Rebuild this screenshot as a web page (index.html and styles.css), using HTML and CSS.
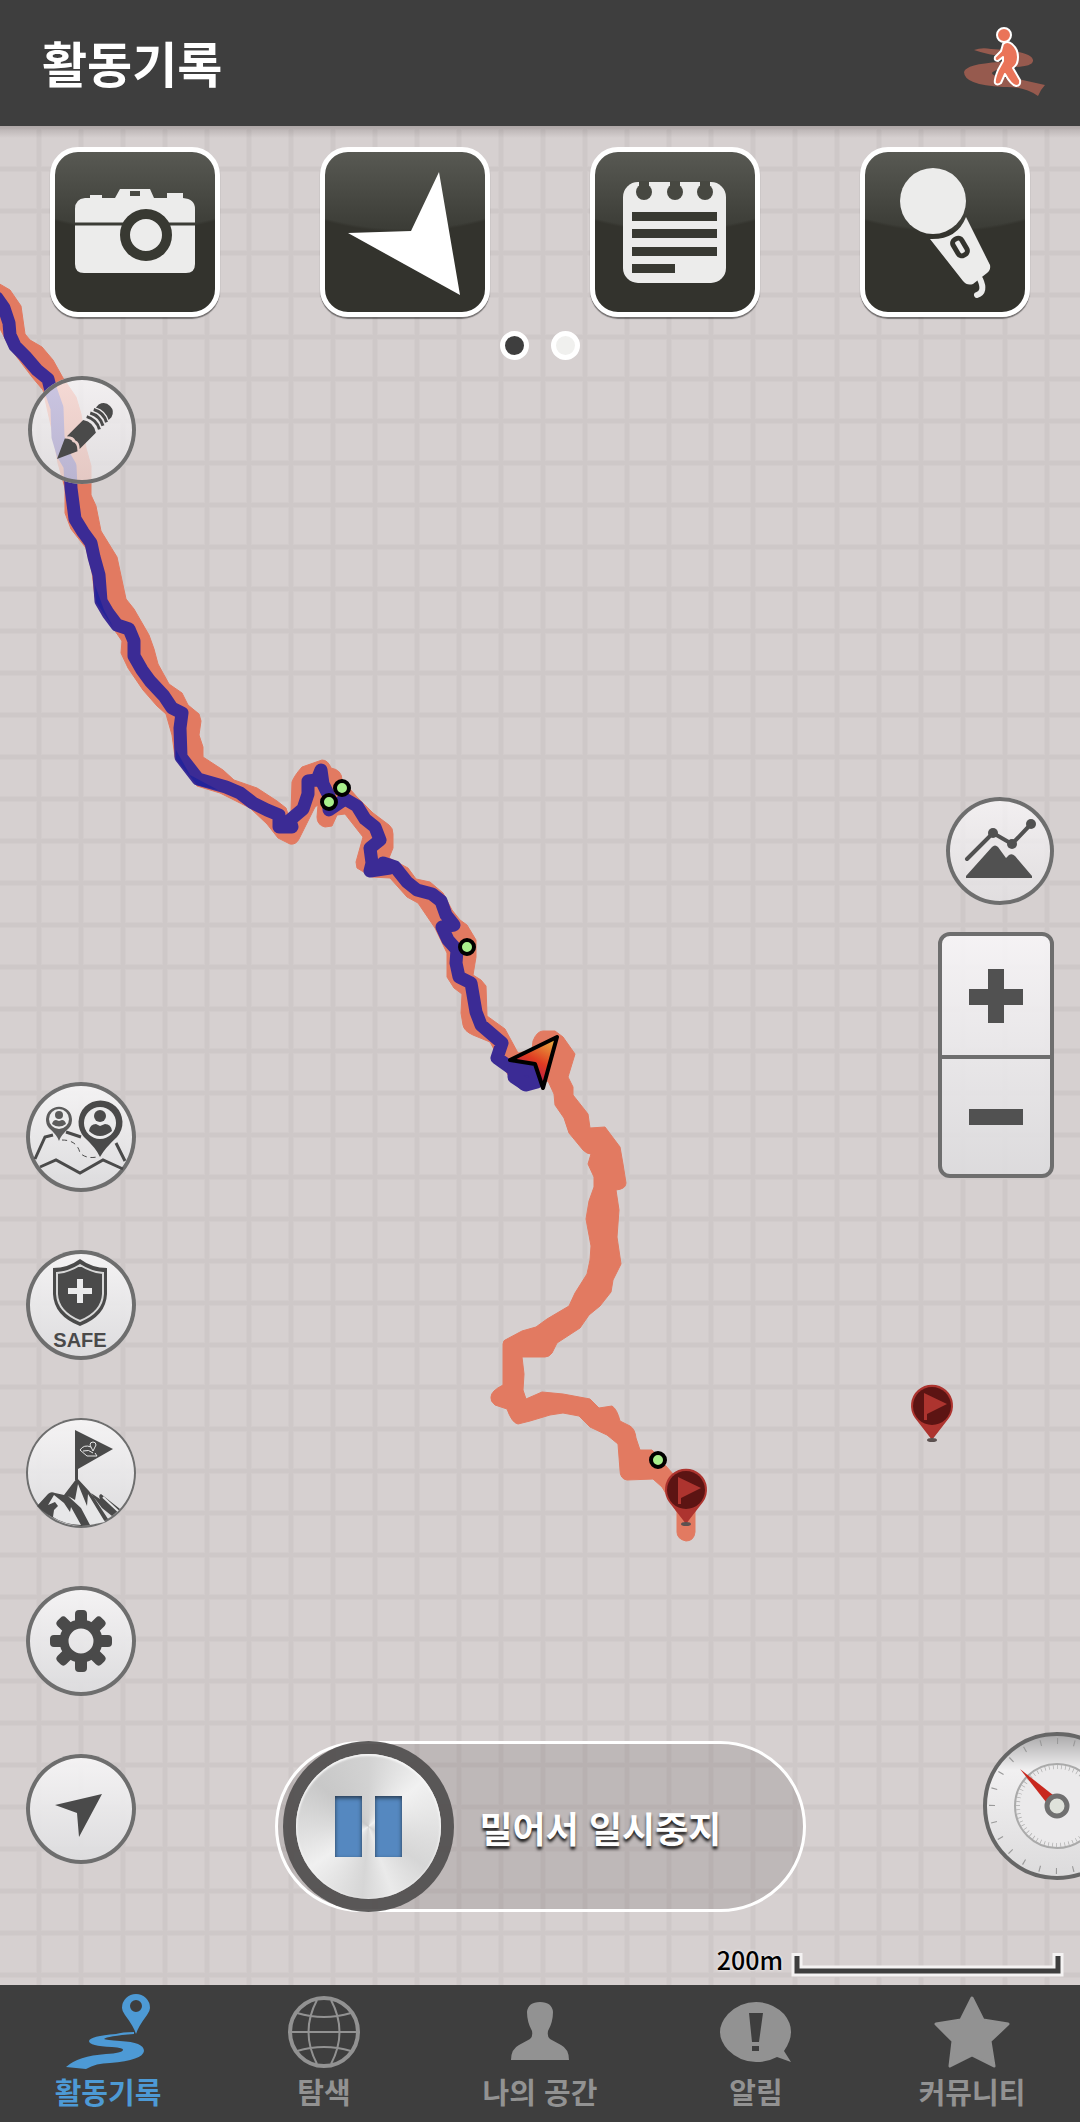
FILE: index.html
```html
<!DOCTYPE html>
<html lang="ko">
<head>
<meta charset="utf-8">
<meta name="viewport" content="width=device-width, initial-scale=1">
<title>활동기록</title>
<link rel="stylesheet" href="styles.css">
</head>
<body>
<header class="app-bar">
  <h1 class="app-title">활동기록</h1>
  <button class="activity-button" type="button" aria-label="걷기">
    <svg width="82" height="71" viewBox="0 0 82 71">
      <path fill="#965a4e" d="M10 23 Q18 20 27 22 Q70 24 69 34 Q68 40 48 40 Q30 42 28 46 Q28 50 54 52 L81 58 Q77 62 74 69 Q60 59 39 60 Q0 58 0 45 Q2 37 36 35 Q52 33 43 30 Q24 28 10 23Z"/>
      <g fill="#ea7459" stroke="#fff" stroke-width="2" stroke-linejoin="round">
        <path d="M39 17 Q43 13 48 17 Q54 22 54 30 Q54 38 49 41 L56 53 Q57 59 52 59 Q47 58 41 47 L37 56 Q33 59 31 56 Q30 53 34 43 L39 34 L39 30 L34 34 Q30 34 31 30 L37 24Z"/>
        <circle cx="40" cy="8" r="7"/>
      </g>
    </svg>
  </button>
</header>

<main class="map">
  <svg class="map-canvas" width="100%" height="100%" aria-hidden="true">
    <defs>
      <pattern id="cell" width="42" height="42" x="36" y="40" patternUnits="userSpaceOnUse">
        <path fill="#d2cccc" d="M0 0H6V42H0ZM0 0H42V6H0Z"/>
        <path fill="#cec8c8" d="M1 1H5V42H1ZM1 1H42V5H1ZM1 0H5V1H1ZM0 1H1V5H0Z"/>
      </pattern>
      <linearGradient id="heading" x1="1" y1="0" x2="0.5" y2="1">
        <stop offset="0" stop-color="#eac044"/>
        <stop offset="0.55" stop-color="#e03a22"/>
        <stop offset="1" stop-color="#a8105c"/>
      </linearGradient>
      <g id="waypoint">
        <circle r="7" fill="#a9ef8c" stroke="#000" stroke-width="4"/>
      </g>
      <g id="flag-pin">
        <path fill="#ad342f" d="M0 34 Q-3 30 -17 12 A21 21 0 1 1 17 12 Q3 30 0 34Z"/>
        <ellipse cy="34" rx="5" ry="2" fill="#5c5150"/>
        <circle r="19" fill="#5c1413"/>
        <path fill="#ad342f" d="M-8 -13 L15 -2 L-5 8 V14 H-8Z"/>
      </g>
    </defs>
    <rect width="100%" height="100%" fill="url(#cell)"/>
    <g transform="translate(0 -126)">
      <path fill="#e27a61" stroke="#e27a61" stroke-width="1" stroke-linejoin="round" d="M-2 283 L10 290 L21 306 L25 334 L30 340 L42 347 L53 360 L63 378 L76 397 L81 414 L86 448 L91 466 L91 495 L96 506 L101 531 L117 557 L126 599 L134 609 L149 635 L154 649 L158 664 L169 684 L182 693 L188 705 L199 714 L201 721 L199 735 L203 747 L203 757 L223 770 L234 780 L257 788 L277 801 L286 808 L288 814 L291 812 L292 782 Q294 776 302 767 L322 760 Q328 760 331 768 Q342 770 342 780 L357 797 L373 813 L389 825 Q393 828 393 834 L393 848 L389 858 L408 868 L416 879 L430 882 L443 893 L452 910 L460 920 L467 925 L476 940 L476 957 L473 975 L481 980 L486 986 L487 1016 L505 1029 L518 1053 L532 1050 L533 1041 Q537 1031 543 1031 L555 1031 L563 1037 L575 1054 L568 1077 L573 1087 L573 1095 L588 1114 L590 1128 L605 1127 L611 1135 L620 1147 L623 1164 L626 1183 Q626 1189 616 1190 L619 1210 L617 1237 L621 1264 L613 1280 L611 1292 L600 1306 L589 1315 L580 1328 L557 1343 L552 1353 Q549 1357 545 1357 L522 1357 L524 1374 L523 1390 L526 1399 L542 1392 L563 1394 L590 1399 L599 1408 L612 1406 Q617 1409 620 1421 L630 1426 Q635 1429 636 1438 L640 1450 L652 1450 L673 1474 L695 1510 L695 1532 Q694 1541 686 1541 Q677 1539 677 1532 L677 1512 L662 1487 L653 1479 L627 1480 Q620 1479 620 1470 L618 1444 L607 1435 L590 1427 L579 1416 L563 1413 L550 1415 L530 1421 L518 1424 Q512 1423 507 1409 L495 1405 Q490 1401 491 1397 Q491 1391 503 1385 L503 1344 Q503 1340 507 1339 L522 1331 L536 1327 L547 1319 L569 1306 L575 1293 L587 1274 L590 1260 L591 1246 L586 1219 L589 1201 L594 1187 L594 1177 L588 1164 L591 1154 Q587 1154 583 1150 L569 1133 L564 1118 L555 1105 L554 1094 L548 1081 L526 1090 L508 1075 L490 1042 L473 1035 Q464 1031 463 1025 L461 1013 L462 994 L454 988 L447 977 L447 953 L435 928 L418 903 L407 897 L390 878 L372 877 L357 868 L356 862 L363 837 L345 814 L337 815 L332 826 L325 827 Q317 825 317 817 L318 805 L315 807 L299 839 Q296 845 290 844 L278 838 L267 824 L250 808 L220 793 L197 786 L175 757 L172 735 L166 714 L157 706 L143 690 L128 668 L121 653 L122 641 L113 628 L95 597 L92 572 L86 548 L71 529 L65 513 L65 488 L58 463 L52 430 L43 390 L32 377 L10 348 L-2 325Z"/>
      <g fill="none" stroke="#3b2b95" stroke-width="13" stroke-linejoin="round" stroke-linecap="round">
        <path d="M-3 298 L4 308 L9 323 L10 335 L15 346 L25 356 L37 370 L48 379 L51 391 L57 408 L58 437 L63 454 L70 466 L71 488 L75 519 L83 532 L91 543 L94 557 L99 575 L101 601 L108 613 L117 625 L129 629 L134 641 L134 656 L142 670 L150 681 L164 696 L172 708 L182 713 L180 728 L181 757 L198 779 L226 787 L240 793 L253 803 L267 810 L279 815 L279 827 L292 827 L290 820 L303 809 L308 794 L308 781 L317 780 L321 770 L323 784 L329 796 L329 810 L345 799 L357 806 L365 819 L375 827 L380 840 L370 848 L372 863 L370 871 L390 868 L383 863 L395 867 L407 882 L417 890 L432 894 L441 901 L446 915 L454 925 L442 927 L448 940 L457 950 L456 963 L459 977 L471 983 L476 1012 L481 1025 L502 1043 L497 1058 L514 1070 L524 1084 L538 1081 L532 1067 L516 1069"/>
        <path fill="#3b2b95" d="M514 1069 L534 1069 L537 1082 L526 1085 L514 1077Z"/>
      </g>
      <path fill="#23239a" d="M95 585 L96 602 L113 627 L104 610ZM176 750 L176 759 L197 785 L218 790 L190 775Z"/>
      <path fill="url(#heading)" stroke="#000" stroke-width="4" stroke-linejoin="round" d="M557 1037 L510 1060 L535 1064 L543 1088Z"/>
      <use href="#waypoint" x="342" y="788"/>
      <use href="#waypoint" x="329" y="802"/>
      <use href="#waypoint" x="467" y="947"/>
      <use href="#waypoint" x="658" y="1460"/>
      <use href="#flag-pin" x="686" y="1490"/>
      <use href="#flag-pin" x="932" y="1406"/>
    </g>
  </svg>

  <div class="toolbar">
    <button class="tile" type="button" aria-label="사진">
      <svg width="160" height="160" viewBox="0 0 160 160">
        <path fill="#ececeb" fill-rule="evenodd" d="M30 46 H35 V43 H47 V46 H60 L65 37 H95 L99 46 H112 V41 H128 V46 Q140 47 140 57 V112 Q140 121 131 121 H29 Q20 121 20 112 V57 Q20 47 30 46ZM75 39V44H85V39Z"/>
        <path stroke="#3b3c36" stroke-width="3" d="M20 72H140"/>
        <circle cx="91" cy="83" r="21" fill="#ececeb" stroke="#383932" stroke-width="10"/>
      </svg>
    </button>
    <button class="tile" type="button" aria-label="현재 위치">
      <svg width="160" height="160" viewBox="0 0 160 160">
        <path fill="#fff" d="M114 20 L135 143 L23 81 L86 79Z"/>
      </svg>
    </button>
    <button class="tile" type="button" aria-label="메모">
      <svg width="160" height="160" viewBox="0 0 160 160">
        <rect x="28" y="30" width="103" height="101" rx="15" fill="#ececeb"/>
        <g fill="#474841">
          <circle cx="49" cy="40" r="8"/><circle cx="80" cy="40" r="8"/><circle cx="110" cy="40" r="8"/>
          <path d="M44 29H54V36H44ZM75 29H85V36H75ZM105 29H115V36H105Z"/>
        </g>
        <path fill="#383932" d="M37 60H122V69H37ZM37 77H122V86H37ZM37 95H122V104H37ZM37 112H80V121H37Z"/>
      </svg>
    </button>
    <button class="tile" type="button" aria-label="음성 녹음">
      <svg width="160" height="160" viewBox="0 0 160 160">
        <g fill="#ececeb">
          <circle cx="68" cy="49" r="33"/>
          <path d="M65 87 Q92 88 101 65 L125 113 Q126 118 122 121 L108 132 Q102 134 98 129Z"/>
        </g>
        <path fill="none" stroke="#ececeb" stroke-width="6" stroke-linecap="round" d="M115 127 Q121 140 112 143"/>
        <rect x="90" y="86" width="10" height="18" rx="4" fill="none" stroke="#33332d" stroke-width="5" transform="rotate(-30 95 95)"/>
      </svg>
    </button>
  </div>

  <div class="pager">
    <button class="dot dot-current" type="button" aria-label="1"></button>
    <button class="dot" type="button" aria-label="2"></button>
  </div>

  <div class="controls">
    <div class="rail rail-left">
      <button class="round round-small" type="button" aria-label="편집">
        <svg width="108" height="108" viewBox="0 0 108 108">
          <g transform="translate(29 83) rotate(-45)" fill="#4a4a4a">
            <path d="M0 0 L20 -9 Q25 -4 23 -1 Q26 3 20 9Z"/>
            <path d="M23 -9 H46 Q52 0 46 9 H23 Q28 4 26 0 Q28 -4 23 -9ZM64 -9 H68 Q75 -7 75 0 Q75 7 68 9 H64 Q69 0 64 -9Z"/>
            <path fill="none" stroke="#4a4a4a" stroke-width="3" d="M51 -9Q56 0 51 9M56 -9Q61 0 56 9M61 -9Q66 0 61 9"/>
          </g>
        </svg>
      </button>
      <div class="rail-group">
        <button class="round" type="button" aria-label="친구 위치">
          <svg width="110" height="110" viewBox="0 0 110 110">
            <g fill="none" stroke="#4a4a4a" stroke-width="3">
              <path d="M9 77 L19 55 L27 53M40 50 L55 55M90 61 L99 79M14 85 L30 78 L54 91 L77 78 L97 87"/>
              <path stroke-width="1" stroke-dasharray="5 4" d="M36 58 Q51 58 54 71 Q60 77 71 75"/>
            </g>
            <path fill="#4a4a4a" d="M74 75 Q70 66 58 55 A22 22 0 1 1 91 55 Q79 66 74 75Z"/>
            <circle cx="74" cy="41" r="16" fill="#ebebec"/>
            <circle cx="74" cy="34" r="6" fill="#4a4a4a"/>
            <path fill="#4a4a4a" d="M63 49 Q64 42 70 42 L74 44 L79 42 Q85 42 86 49 Q80 54 74 54 Q68 54 63 49Z"/>
            <path fill="#5c5c5c" d="M33 59 Q31 53 23 46 A13 13 0 1 1 43 46 Q35 53 33 59Z"/>
            <circle cx="33" cy="37" r="10" fill="#ededee"/>
            <circle cx="33" cy="33" r="4" fill="#5c5c5c"/>
            <path fill="#5c5c5c" d="M26 42 Q27 38 30 38 L33 39 L36 38 Q39 38 40 42 Q33 47 26 42Z"/>
          </svg>
        </button>
        <button class="round" type="button" aria-label="안전">
          <svg width="110" height="110" viewBox="0 0 110 110">
            <path fill="#4a4a4a" d="M54 9 Q66 18 81 18 V44 Q80 66 54 76 Q28 66 27 44 V18 Q42 18 54 9Z"/>
            <path fill="none" stroke="#d8d8d8" stroke-width="2" d="M54 15 Q65 22 77 23 V44 Q76 62 54 71 Q32 62 31 44 V23 Q43 22 54 15Z"/>
            <path fill="#ebebec" d="M51 29H57V38H66V44H57V53H51V44H42V38H51Z"/>
            <text class="safe-text" x="54" y="97" text-anchor="middle">SAFE</text>
          </svg>
        </button>
        <button class="round round-thin" type="button" aria-label="정상 정복">
          <svg width="110" height="110" viewBox="0 0 110 110">
            <path fill="#4a4a4a" d="M49 12 L87 31 L52 51 V62 H49Z"/>
            <path fill="none" stroke="#e8e8e8" stroke-width="1" d="M54 32 Q58 26 65 29 M54 32 L61 38 H71 L69 35 M57 33 Q63 31 67 35 M67 33 L64 27 A3 3 0 1 1 70 27Z"/>
            <path fill="#4a4a4a" d="M51 60 L63 73 L76 90 L86 98 L94 91 L75 76 Q72 77 74 81 L65 75 L82 101 Q70 108 55 108 Q30 106 11 88 L22 76 Q25 73 29 75 L38 77Z"/>
            <path fill="#e7e7e8" d="M52 66 L61 88 L62 76 L79 104 L64 107 L55 90 L42 78 L49 82Z"/>
            <path fill="#e7e7e8" d="M22 87 L28 77 L38 85 L44 94 L45 89 L55 107 Q37 106 27 99 L28 92 L32 88 L29 84Z"/>
            <path fill="none" stroke="#e7e7e8" stroke-width="2" d="M77 79 L92 93"/>
          </svg>
        </button>
        <button class="round" type="button" aria-label="설정">
          <svg width="110" height="110" viewBox="0 0 110 110">
            <circle cx="55" cy="55" r="17" fill="none" stroke="#4a4a4a" stroke-width="9"/>
            <g fill="#4a4a4a">
              <path id="teeth" d="M49 37V28Q49 24 53 24H57Q61 24 61 28V37ZM49 73V82Q49 86 53 86H57Q61 86 61 82V73Z"/>
              <use href="#teeth" transform="rotate(45 55 55)"/>
              <use href="#teeth" transform="rotate(90 55 55)"/>
              <use href="#teeth" transform="rotate(135 55 55)"/>
            </g>
          </svg>
        </button>
        <button class="round" type="button" aria-label="내 위치로 이동">
          <svg width="110" height="110" viewBox="0 0 110 110">
            <path fill="#4a4a4a" d="M76 40 L53 83 L51 59 L29 51Z"/>
          </svg>
        </button>
      </div>
    </div>

    <button class="slider" type="button">
      <span class="knob"><span class="knob-face"><span class="bar"></span><span class="bar"></span></span></span>
      <span class="slider-label">밀어서 일시중지</span>
    </button>

    <div class="rail rail-right">
      <div class="view-tools">
        <button class="round round-small" type="button" aria-label="고도 그래프">
          <svg width="108" height="108" viewBox="0 0 108 108">
            <g fill="#515151">
              <circle cx="47" cy="36" r="5"/><circle cx="66" cy="47" r="5"/><circle cx="85" cy="27" r="5"/>
              <path d="M20 79 L46 50 Q49 47 52 50 L60 61 L63 58 Q66 56 69 59 L86 79 V81 H20Z"/>
            </g>
            <path fill="none" stroke="#515151" stroke-width="4" stroke-linecap="round" d="M21 62 L47 36 L66 47 L85 27"/>
          </svg>
        </button>
        <div class="zoom">
          <button class="zoom-button" type="button" aria-label="확대">
            <svg width="54" height="54" viewBox="0 0 54 54"><path fill="#515151" d="M19 0H35V20H54V36H35V54H19V36H0V20H19Z"/></svg>
          </button>
          <button class="zoom-button" type="button" aria-label="축소">
            <svg width="54" height="54" viewBox="0 0 54 54"><path fill="#515151" d="M0 19H54V35H0Z"/></svg>
          </button>
        </div>
      </div>
      <button class="compass" type="button" aria-label="나침반">
        <svg width="148" height="148" viewBox="0 0 148 148">
          <defs>
            <linearGradient id="dial" x2="0" y2="1">
              <stop offset="0" stop-color="#a9a8a9"/>
              <stop offset="0.25" stop-color="#f1f0f1"/>
              <stop offset="1" stop-color="#dcdbdc"/>
            </linearGradient>
          </defs>
          <circle cx="74" cy="74" r="72" fill="url(#dial)" stroke="#666" stroke-width="4"/>
          <circle cx="74" cy="74" r="65" fill="none" stroke="#999" stroke-width="6" pathLength="360" stroke-dasharray="1 14"/>
          <circle cx="74" cy="74" r="42" fill="#ebeaeb" stroke="#aaa" stroke-width="2"/>
          <circle cx="74" cy="74" r="39" fill="none" stroke="#aaa" stroke-width="4" pathLength="360" stroke-dasharray="1 5"/>
          <path fill="#c8281e" d="M37 37 L70 63 L63 70Z"/>
          <circle cx="74" cy="74" r="10" fill="#dfe2db" stroke="#707070" stroke-width="5"/>
        </svg>
      </button>
    </div>
  </div>

  <div class="scale">
    <span class="scale-label">200m</span>
    <svg width="273" height="24" viewBox="0 0 273 24" aria-hidden="true">
      <path fill="none" stroke="#f4f2f2" stroke-width="11" d="M6 0V18H267V0"/>
      <path fill="none" stroke="#3e3e3e" stroke-width="5" d="M6 3V18H267V3"/>
    </svg>
  </div>
</main>

<nav class="tabs">
  <a class="tab tab-current" href="#record" aria-current="page">
    <svg width="84" height="76" viewBox="0 0 84 76" fill="currentColor">
      <path fill-rule="evenodd" d="M70 40 Q68 33 59 21 Q56 17 56 14 A14 14 0 0 1 84 14 Q84 17 81 21 Q72 33 70 40ZM70 6A6 6 0 1 0 70 18A6 6 0 1 0 70 6Z"/>
      <path d="M68 38 Q56 38 50 40 Q24 42 23 47 Q23 52 46 53 Q58 54 57 56 Q56 59 40 60 Q12 62 0 73 L20 75 Q30 69 44 69 Q77 66 78 57 Q78 48 54 47 Q40 46 38 45 Q41 42 68 40Z"/>
    </svg>
    <span>활동기록</span>
  </a>
  <a class="tab" href="#explore">
    <svg width="84" height="76" viewBox="0 0 84 76" fill="none" stroke="currentColor" stroke-width="2">
      <circle cx="42" cy="38" r="34" stroke-width="4"/>
      <path d="M8 38H76M35 6Q18 38 35 70M49 6Q66 38 49 70M15 19Q42 27 69 19M15 57Q42 49 69 57"/>
    </svg>
    <span>탐색</span>
  </a>
  <a class="tab" href="#my">
    <svg width="84" height="76" viewBox="0 0 84 76" fill="currentColor">
      <path d="M42 8 Q54 8 55 18 Q55 28 50 37 Q49 43 52 45 L63 51 Q71 55 71 66 H13 Q13 55 21 51 L32 45 Q35 43 34 37 Q29 28 29 18 Q30 8 42 8Z"/>
    </svg>
    <span>나의 공간</span>
  </a>
  <a class="tab" href="#alerts">
    <svg width="84" height="76" viewBox="0 0 84 76" fill="currentColor">
      <path fill-rule="evenodd" d="M42 8 Q58 8 70 20 Q84 37 70 57 L77 68 L63 63 Q54 68 42 68 Q26 68 14 56 Q-2 38 14 20 Q26 8 42 8ZM35 19 L38 48 H45 L49 19ZM38 52V57H45V52Z"/>
    </svg>
    <span>알림</span>
  </a>
  <a class="tab" href="#community">
    <svg width="84" height="76" viewBox="0 0 84 76" fill="currentColor" stroke="currentColor" stroke-width="3" stroke-linejoin="round">
      <path d="M42 4 L53 26 L78 30 L60 47 L64 72 L42 61 L20 72 L23 47 L6 30 L31 26Z"/>
    </svg>
    <span>커뮤니티</span>
  </a>
</nav>
</body>
</html>
```
FILE: styles.css
```css
* {
  box-sizing: border-box;
}

body {
  margin: 0;
  min-height: 100vh;
  display: flex;
  flex-direction: column;
  overflow-x: hidden;
  background: #3e3e3e;
  font-family: "Noto Sans CJK KR", "Noto Sans", sans-serif;
}

button {
  margin: 0;
  padding: 0;
  border: 0;
  background: none;
  font: inherit;
  cursor: pointer;
}

svg {
  display: block;
}

.app-bar {
  height: 126px;
  padding: 0 34px 2px 42px;
  display: flex;
  align-items: center;
  justify-content: space-between;
  background: #3e3e3e;
}

.app-title {
  margin: 0;
  color: #fff;
  font-size: 49px;
  line-height: 72px;
  font-weight: 700;
}

.map {
  position: relative;
  flex: 1;
  display: flex;
  flex-direction: column;
  overflow: hidden;
  background: #d6d0d0;
}

.map::after {
  content: "";
  position: absolute;
  inset: 0 0 auto;
  height: 12px;
  background: linear-gradient(rgba(90, 80, 80, 0.28), rgba(90, 80, 80, 0));
  pointer-events: none;
}

.map-canvas {
  position: absolute;
  inset: 0;
}

.toolbar,
.pager,
.controls,
.scale {
  position: relative;
}

.toolbar {
  padding-top: 21px;
  display: grid;
  grid-template-columns: repeat(4, 1fr);
  justify-items: center;
}

.tile {
  border: 5px solid #fff;
  border-radius: 28px;
  background:
    radial-gradient(circle 300px at 50% -220px, transparent 99%, #33332d 100%),
    linear-gradient(#585953, #3a3b35 80px);
  box-shadow: 0 2px 1px rgba(0, 0, 0, 0.45);
}

.pager {
  margin-top: 14px;
  display: flex;
  justify-content: center;
  gap: 22px;
}

.dot {
  width: 29px;
  height: 29px;
  border: 5px solid #fff;
  border-radius: 50%;
  background: #f0f0ee;
}

.dot-current {
  background: #3e3e3e;
}

.controls {
  flex: 1;
  padding-top: 16px;
  display: grid;
  grid-template-columns: 1fr auto 1fr;
}

.rail-left {
  padding: 0 0 48px 26px;
  display: flex;
  flex-direction: column;
  justify-content: space-between;
  align-items: flex-start;
}

.rail-left > .round-small {
  margin-left: 2px;
}

.rail-group {
  display: grid;
  gap: 58px;
}

.round {
  width: 110px;
  height: 110px;
  border-radius: 50%;
  background: linear-gradient(rgba(248, 247, 248, 0.9), rgba(221, 221, 223, 0.9));
  box-shadow: inset 0 0 0 4px #6e6e6e;
}

.round-small {
  width: 108px;
  height: 108px;
  background: linear-gradient(rgba(252, 250, 252, 0.75), rgba(228, 226, 228, 0.75));
}

.round-thin {
  box-shadow: inset 0 0 0 2px #6e6e6e;
}

.safe-text {
  fill: #4a4a4a;
  font: 700 20px "Liberation Sans", sans-serif;
}

.slider {
  align-self: end;
  width: 531px;
  height: 171px;
  padding-left: 5px;
  display: flex;
  align-items: center;
  gap: 26px;
  border: 3px solid #fff;
  border-radius: 86px;
  background: rgba(70, 60, 62, 0.16);
}

.knob {
  flex: none;
  width: 171px;
  height: 171px;
  padding: 13px;
  border-radius: 50%;
  background: rgba(80, 78, 78, 0.92);
}

.knob-face {
  height: 145px;
  display: flex;
  align-items: center;
  justify-content: center;
  gap: 13px;
  border-radius: 50%;
  background: conic-gradient(#d2d2d2, #f1f1f1 50deg, #dedede 100deg, #d6d6d6 125deg, #eaeaea 160deg, #d6d6d6 185deg, #f0f0f0 235deg, #dcdcdc 270deg, #c8c8c8 310deg, #d2d2d2);
  box-shadow: inset 0 1px 2px 1px #f6f6f6;
}

.bar {
  width: 27px;
  height: 61px;
  background: #5588c0;
  box-shadow: inset 0 2px 4px #26384c;
}

.slider-label {
  color: #fff;
  font-size: 36px;
  line-height: 54px;
  font-weight: 700;
  white-space: nowrap;
  text-shadow: 0 3px 3px rgba(0, 0, 0, 0.85);
}

.rail-right {
  padding-bottom: 32px;
  display: grid;
  grid-template-rows: 19fr auto 25fr auto;
  justify-items: end;
}

.view-tools {
  grid-row: 2;
  margin-right: 26px;
  display: grid;
  justify-items: end;
  gap: 27px;
}

.zoom {
  width: 116px;
  height: 246px;
  display: grid;
  grid-template-rows: 1fr 1fr;
  border: 4px solid #6e6e6e;
  border-radius: 12px;
  background: linear-gradient(rgba(248, 246, 248, 0.9), rgba(221, 220, 222, 0.9));
}

.zoom-button {
  display: grid;
  place-items: center;
}

.zoom-button + .zoom-button {
  border-top: 4px solid #6e6e6e;
}

.compass {
  grid-row: 4;
  margin-right: -51px;
}

.scale {
  height: 73px;
  padding: 34px 16px 0 0;
  display: flex;
  justify-content: flex-end;
  align-items: flex-start;
  gap: 8px;
}

.scale-label {
  color: #000;
  font-size: 25px;
  line-height: 26px;
  font-weight: 500;
  text-shadow: 0 0 3px #fff;
}

.scale svg {
  margin-top: 7px;
}

.tabs {
  height: 137px;
  padding-top: 9px;
  display: grid;
  grid-template-columns: repeat(5, 1fr);
  background: #3e3e3e;
}

.tab {
  display: flex;
  flex-direction: column;
  align-items: center;
  color: #929292;
  font-size: 29px;
  line-height: 43px;
  font-weight: 700;
  text-decoration: none;
  white-space: nowrap;
}

.tab-current {
  color: #4d9ad5;
}
```
